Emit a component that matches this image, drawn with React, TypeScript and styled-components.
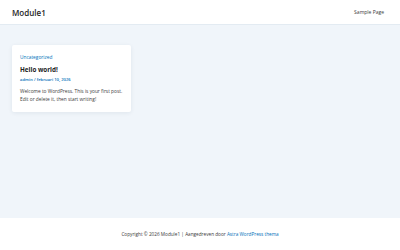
import styled, { createGlobalStyle } from "styled-components";

const GlobalStyle = createGlobalStyle`
  html, body {
    margin: 0;
    padding: 0;
  }
  body {
    font-family: "Open Sans", "Noto Sans", sans-serif;
    color: #3a3a3a;
    background: #ffffff;
  }
`;

const Page = styled.div`
  display: flex;
  flex-direction: column;
  min-height: 250px;
  width: 400px;
`;

const Header = styled.header`
  height: 24px;
  display: flex;
  align-items: center;
  justify-content: space-between;
  padding: 0 16px 0 12px;
  background: #ffffff;
  border-bottom: 1px solid #e3ebf2;
`;

const SiteTitle = styled.a`
  font-size: 8px;
  font-weight: 600;
  color: #1e1e1e;
  text-decoration: none;
  margin-top: 1px;
`;

const NavLink = styled.a`
  font-size: 5px;
  color: #3a3a3a;
  text-decoration: none;
  margin-top: -1px;
`;

const Main = styled.main`
  flex: 1;
  background: #f0f5fa;
  padding: 20px 12px;
`;

const Card = styled.article`
  width: 119px;
  box-sizing: border-box;
  background: #ffffff;
  border-radius: 2px;
  box-shadow: 0 1px 4px rgba(30, 50, 80, 0.08);
  padding: 9px 8px 9px;
`;

const Category = styled.a`
  display: block;
  font-size: 4.8px;
  font-weight: 500;
  color: #0170b9;
  text-decoration: none;
  line-height: 6px;
`;

const Title = styled.h2`
  margin: 6px 0 0;
  font-size: 6.3px;
  font-weight: 700;
  color: #222222;
  line-height: 8px;
`;

const Meta = styled.div`
  margin-top: 3px;
  font-size: 4.2px;
  font-weight: 600;
  color: #0170b9;
  line-height: 6px;
`;

const Excerpt = styled.p`
  margin: 5px 0 0;
  font-size: 4.8px;
  line-height: 7.5px;
  color: #3a3a3a;
`;

const Footer = styled.footer`
  height: 32px;
  display: flex;
  align-items: center;
  justify-content: center;
  background: #ffffff;
  font-size: 4.7px;
  color: #3a3a3a;
`;

const FooterLink = styled.a`
  color: #0170b9;
  text-decoration: none;
`;

export default function App() {
  return (
    <>
      <GlobalStyle />
      <Page>
        <Header>
          <SiteTitle>Module1</SiteTitle>
          <NavLink>Sample Page</NavLink>
        </Header>
        <Main>
          <Card>
            <Category>Uncategorized</Category>
            <Title>Hello world!</Title>
            <Meta>admin / februari 10, 2026</Meta>
            <Excerpt>
              Welcome to WordPress. This is your first post.
              <br />
              Edit or delete it, then start writing!
            </Excerpt>
          </Card>
        </Main>
        <Footer>
          <span>
            Copyright © 2026 Module1 | Aangedreven door{" "}
            <FooterLink>Astra WordPress thema</FooterLink>
          </span>
        </Footer>
      </Page>
    </>
  );
}
